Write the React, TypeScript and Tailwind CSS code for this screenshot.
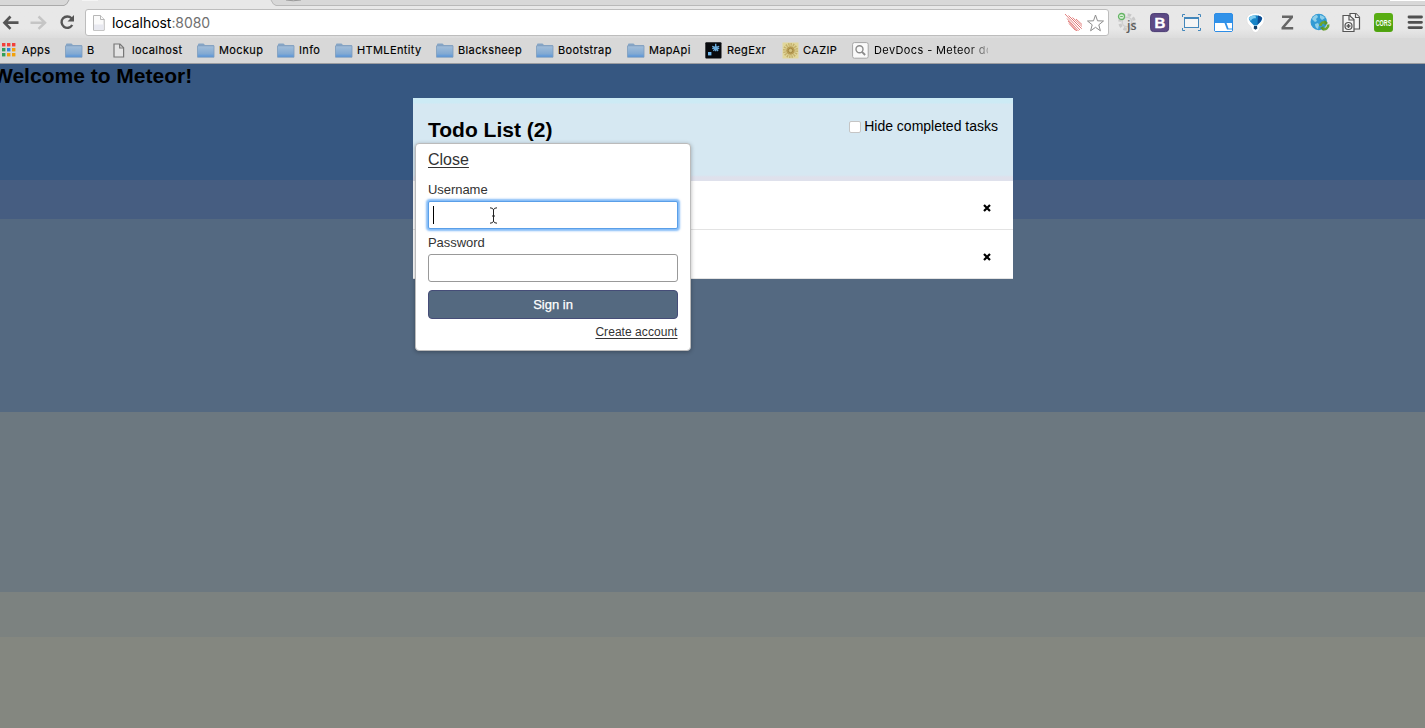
import React from "react";

const Folder = () => (
  <svg width="18" height="15" viewBox="0 0 18 15">
    <defs>
      <linearGradient id="folder" x1="0" y1="0" x2="0" y2="1">
        <stop offset="0" stopColor="#a4bfd9" />
        <stop offset="0.7" stopColor="#82a9d2" />
        <stop offset="1" stopColor="#5292dc" />
      </linearGradient>
    </defs>
    <path d="M1 3V1.500Q1 .5 2 .5h4.500l1.500 1.500h8q1 0 1 1V5H1z" fill="#86a5c5" />
    <path d="M.5 2.800h16.500v11.400H.5z" fill="url(#folder)" stroke="#7d9dbd" strokeWidth=".8" />
  </svg>
);

const Apps = () => (
  <svg width="14" height="14" viewBox="0 0 14 14">
    {["#f2413b", "#f2413b", "#f2413b", "#2f9e5b", "#2c82e0", "#f2a10c", "#2f9e5b", "#f2a10c", "#f2a10c"].map((c, i) => (
      <rect key={i} x={(i % 3) * 5} y={Math.floor(i / 3) * 5} width="3.4" height="3.4" fill={c} />
    ))}
  </svg>
);

const Page = () => (
  <svg width="12" height="15" viewBox="0 0 12 15" fill="#e4e4e4" stroke="#777" strokeWidth="1.2">
    <path d="M1 1h6l3.600 3.800V14H1z" />
    <path d="M6.700 1v4h4" fill="none" />
  </svg>
);

const RegExr = () => (
  <svg width="17" height="17" viewBox="0 0 17 17">
    <rect x=".3" y=".3" width="16.200" height="16.200" rx="1" fill="#080a0e" />
    <rect x="3" y="10" width="3.400" height="3.400" fill="#70b7ed" />
    <path d="M10.700 1.800v7.500M7.200 4.300l7 2.400M14.200 4.300l-7 2.400M8.500 9l2.200-3.500L13 9" fill="none" stroke="#69a9d8" strokeWidth="1.400" />
  </svg>
);

const Cazip = () => (
  <svg width="17" height="17" viewBox="0 0 17 17" fill="none">
    <rect x=".5" y=".5" width="16" height="16" fill="#e1d79b" />
    <circle cx="8.500" cy="8.500" r="6" stroke="#c4b06a" strokeWidth="3" strokeDasharray="1.300 1" />
    <circle cx="8.500" cy="8.500" r="4.300" fill="#b89d54" />
    <circle cx="8.500" cy="8.500" r="2.200" fill="#d2c07c" stroke="#a2873f" />
  </svg>
);

const DevDocs = () => (
  <svg width="17" height="17" viewBox="0 0 17 17" fill="none">
    <rect x=".6" y=".6" width="15.600" height="15.600" rx="1.800" fill="#fafafa" stroke="#a5a5a5" />
    <circle cx="7.500" cy="7.200" r="3.500" stroke="#8b8b8b" strokeWidth="1.400" />
    <path d="M10 9.800l3.100 3.200" stroke="#8b8b8b" strokeWidth="1.900" />
  </svg>
);

type Bookmark = { label: string; icon: React.ReactNode; cell: string; pad: string };

const bookmarks: Bookmark[] = [
  { label: "Apps", icon: <Apps />, cell: "w-[63px]", pad: "w-5" },
  { label: "B", icon: <Folder />, cell: "w-12", pad: "w-[22px]" },
  { label: "localhost", icon: <Page />, cell: "w-[84px]", pad: "w-[19px]" },
  { label: "Mockup", icon: <Folder />, cell: "w-20", pad: "w-[22px]" },
  { label: "Info", icon: <Folder />, cell: "w-[58px]", pad: "w-[22px]" },
  { label: "HTMLEntity", icon: <Folder />, cell: "w-[101px]", pad: "w-[22px]" },
  { label: "Blacksheep", icon: <Folder />, cell: "w-[100px]", pad: "w-[22px]" },
  { label: "Bootstrap", icon: <Folder />, cell: "w-[91px]", pad: "w-[22px]" },
  { label: "MapApi", icon: <Folder />, cell: "w-[78px]", pad: "w-[22px]" },
  { label: "RegExr", icon: <RegExr />, cell: "w-[77px]", pad: "w-[22px]" },
  { label: "CAZIP", icon: <Cazip />, cell: "w-[70px]", pad: "w-[21px]" },
];

const Extensions = () => (
  <div className="flex h-6 shrink-0 items-center gap-2">
    <svg width="24" height="24" viewBox="0 0 24 24">
      <circle cx="11" cy="11" r="7.300" fill="none" stroke="#c9c9c9" strokeWidth="3" strokeDasharray="3.500 2.300" />
      <circle cx="11" cy="11" r="4.800" fill="#e2e2e2" stroke="#cfcfcf" strokeWidth="1.500" />
      <circle cx="5.500" cy="5.500" r="3" fill="#d8efd5" stroke="#65b565" strokeWidth="1.300" />
      <path d="M4.200 5.500h2.600" stroke="#65b565" />
      <text x="11" y="18.500" fontSize="12.500" fontWeight="600" fill="#5c5c5c" fontFamily="Open Sans, sans-serif">js</text>
    </svg>
    <svg width="24" height="24" viewBox="0 0 24 24">
      <rect x="2.600" y="2.600" width="18" height="18" rx="3" fill="#5d4a85" stroke="#4a3c73" />
      <text x="11.800" y="17" textAnchor="middle" fontSize="15" fontWeight="700" fill="#fff" stroke="#fff" strokeWidth=".4" fontFamily="Liberation Sans, sans-serif">B</text>
    </svg>
    <svg width="24" height="24" viewBox="0 0 24 24" fill="none" stroke="#4387bb">
      <rect x="4.500" y="6.500" width="14" height="10" fill="#f5f5f5" />
      <path d="M4.500 7h14" strokeWidth="2" />
      <path d="M2.500 6V3.500H5M18 3.500h2.500V6M2.500 17v2.500H5M18 19.500h2.500V17" />
    </svg>
    <svg width="24" height="24" viewBox="0 0 24 24">
      <rect x="2.500" y="2.500" width="18" height="18" rx="1.500" fill="#3192e9" stroke="#2d8de6" />
      <path d="M3 12h9.500l2.500 6.500h5V20H3zM14.500 12H20v5.500h-3.500z" fill="#fff" />
    </svg>
    <svg width="24" height="24" viewBox="0 0 24 24">
      <path d="M2.500 7.500Q4 2 11.500 2t9 5.500q.5 5-4.500 8.500-1 5-4.500 5.500Q8 21 7 16 2 12.500 2.500 7.500z" fill="#fff" stroke="#d3d3d3" strokeWidth=".5" />
      <path d="M4.800 7q2-2.700 6.700-2.700T18.200 7q0 3-5.200 7.500h-3Q4.800 10 4.800 7z" fill="#1684c7" />
      <path d="M4.800 7q2-2.700 6.700-2.700l.5 3Q8 6.500 7 10 5.200 8.500 4.800 7z" fill="#7fcdf0" />
      <path d="M14 4.600q3.200.7 4.200 2.400-.5 3-4.700 6.500z" fill="#0d4a90" />
      <path d="M10 15h3l.3 2.500-1.800 1.200-1.800-1.200z" fill="#123f68" />
    </svg>
    <svg width="24" height="24" viewBox="0 0 24 24">
      <path d="M6 4.500h11v2.200L9 16h8.200v2.500H5.500v-2.200L13.500 7H6z" fill="#666" />
    </svg>
    <svg width="24" height="24" viewBox="0 0 24 24">
      <circle cx="10.800" cy="11" r="8.300" fill="#339bd4" />
      <path d="M4 8q2-4 5-4l1 2-2 2 1 2-2 1zM12 4q4 1 5 3l-3 2-2-2zM7 13l3-1 1 2-1 4q-3-1-3-5z" fill="#8fcfe9" />
      <path d="M12.500 15a3.700 3.700 0 0 1 5-3.500M20.200 13.500a4 4 0 0 1-5.500 4.300" fill="none" stroke="#6ba52f" strokeWidth="2.600" />
      <path d="M16.500 9l3.500 3-3.500 2.500zM15.500 15v5L12 17z" fill="#599729" />
    </svg>
    <svg width="24" height="24" viewBox="0 0 24 24" fill="#f4f4f4" stroke="#555" strokeWidth="1.200">
      <path d="M10 2.500h6l3.500 3.800V18H10z" />
      <path d="M15.500 2.500v4h4M3 4.500h6.500l4.500 4V20.500H3z" />
      <path d="M9 4.500v4.500h5" fill="none" />
      <circle cx="8.500" cy="15" r="3.500" />
      <path d="M8.500 13v4M6.500 15h4" strokeWidth="1.500" />
    </svg>
    <svg width="24" height="24" viewBox="0 0 24 24">
      <rect x="2" y="2" width="19" height="19" rx="3" fill="#58ad13" />
      <path d="M2.500 12h18v6q0 2.500-2.500 2.500H5Q2.500 20.500 2.500 18z" fill="#48990d" opacity=".6" />
      <text x="11.500" y="14.800" textAnchor="middle" textLength="15.500" lengthAdjust="spacingAndGlyphs" fontSize="9" fontWeight="700" fill="#fff" fontFamily="Liberation Sans, sans-serif">CORS</text>
    </svg>
    <svg width="24" height="24" viewBox="0 0 24 24">
      <path d="M5 6h12.500M5 11.300h12.500M5 16.600h12.500" stroke="#505050" strokeWidth="2.800" strokeLinecap="round" />
    </svg>
  </div>
);

const Browser = () => (
  <header className="flex h-16 shrink-0 flex-col overflow-hidden border-b border-[#9b9ca0] bg-[#d8d8d8]">
    <svg className="shrink-0" width="1425" height="6" viewBox="0 0 1425 6">
      <rect width="1425" height="6" fill="#e8e8e8" />
      <path d="M0 0h69q-2 5-5 5.500H0z" fill="#d8d8d8" />
      <path d="M69 0q-2 5-5 5.500H0" fill="none" stroke="#aaa" />
      <path d="M271 0q2 5 5 5.500h1149V0z" fill="#d8d8d8" />
      <path d="M271 0q2 5 5 5.500h1149" fill="none" stroke="#b9b9b9" />
      <path d="M82 0h16M1390 .5h35" stroke="#fff" />
      <path d="M286 0q7 1.500 15 0" fill="none" stroke="#999" />
    </svg>
    <div className="flex h-8 shrink-0 bg-linear-to-b from-[#e8e8e8] from-70% to-[#dcdcdc]">
      <svg className="shrink-0" width="85" height="32" viewBox="0 6 85 32" fill="none">
        <path d="M4 22.700h14.500M10.500 16.500l-6 6.200 6 6.200" stroke="#555" strokeWidth="2.700" />
        <path d="M30.500 22.700h13M38.500 16.500l6.500 6.200-6.500 6.200" stroke="#c5c5c5" strokeWidth="2.500" />
        <path d="M71.500 18.300a5.700 5.700 0 1 0 .7 6.700" stroke="#555" strokeWidth="2.400" />
        <path d="M74 15v6.500h-6.500z" fill="#555" />
      </svg>
      <div className="mt-[3px] flex h-[27px] w-[1024px] shrink-0 items-center rounded-[3px] border border-[#bdbdbd] bg-white">
        <svg className="ml-[7px] shrink-0" width="12" height="16" viewBox="0 0 12 16" fill="#fafafa" stroke="#b7b7b7">
          <path d="M.5.5h7l3.700 3.800v11H.5z" />
          <path d="M1 9.500h9.700v5.300H1z" fill="#e8e9f0" stroke="none" />
          <path d="M7.500.5v4h3.700" />
        </svg>
        <span className="ml-[7px] whitespace-nowrap font-[Inter,sans-serif] text-sm leading-5 tracking-[-0.05px] text-black">
          localhost<span className="text-[#707070]">:8080</span>
        </span>
        <svg className="ml-auto mr-0.5 shrink-0" width="42" height="22" viewBox="0 0 42 22" fill="none">
          <path d="M1 2l15 16M4.500 3.500l13 13M8.500 5.500l9.500 9M12 7l6 5.500M3 6.500l11.500 12.500M5 11.500l6.500 7M4 9l9 10M6.500 5.500l11 11" stroke="#e07472" strokeWidth=".9" />
          <path d="M31.500 3l2 5.800 6 .2-4.700 3.800 1.600 6-4.900-3.500-4.900 3.500 1.600-6L23.500 9l6-.2z" stroke="#8d8d8d" />
        </svg>
      </div>
      <div className="ml-[7px] mt-[5px]"><Extensions /></div>
    </div>
    <nav className="flex h-[25px] shrink-0 items-center pb-px pl-0.5 font-[Inter,sans-serif] text-[11px] tracking-[0.38px] text-black [-webkit-text-stroke:0.15px_#000]">
      {bookmarks.map((b) => (
        <a key={b.label} className={`${b.cell} flex shrink-0 items-center whitespace-nowrap`}>
          <span className={`${b.pad} shrink-0`}>{b.icon}</span>
          {b.label}
        </a>
      ))}
      <a className="flex w-[136px] items-center overflow-hidden whitespace-nowrap">
        <span className="w-[22px] shrink-0"><DevDocs /></span>
        <span className="bg-linear-to-r from-black from-[88px] to-[#d8d8d8] to-[120px] bg-clip-text text-transparent [-webkit-text-stroke:0px]">DevDocs - Meteor do</span>
      </a>
    </nav>
  </header>
);

const Task = () => (
  <li className="flex h-[49px] items-center justify-end border-b border-[#e3e3e3] bg-white pr-[22px]">
    <svg className="mt-[5px]" width="8" height="8" viewBox="0 0 8 8">
      <path d="M1 1l6 6M7 1L1 7" stroke="#000" strokeWidth="2.200" />
    </svg>
  </li>
);

const Login = () => (
  <form className="absolute left-0.5 top-[45px] flex h-52 w-[276px] flex-col rounded border border-[#bbb] bg-white px-3 text-[13px] text-[#333] shadow-[0_1px_4px_rgba(0,0,0,0.3)]">
    <a className="ml-[0.5px] mt-1.5 self-start text-base leading-5 underline underline-offset-2">Close</a>
    <label className="ml-[0.5px] mt-[11px] leading-[18px] tracking-[-0.05px]">Username</label>
    <div className="mt-0.5 flex h-7 shrink-0 items-center rounded-[2px] border border-[#5a9fe8] bg-white pl-1 shadow-[0_0_2px_2px_rgba(91,166,245,0.75)]">
      <span className="h-[18px] w-px bg-black" />
      <svg className="ml-[55px] mt-px" width="9" height="17" viewBox="0 0 9 17" fill="none" stroke="#222">
        <path d="M1 .8q3 0 3.500 2Q5 .8 8 .8M4.500 2.500v12M3 9h3M1 16.200q3 0 3.500-2 .5 2 3.500 2" />
      </svg>
    </div>
    <label className="ml-[0.5px] mt-[5px] leading-[18px] tracking-[-0.05px]">Password</label>
    <div className="mt-0.5 h-7 shrink-0 rounded-[3px] border border-[#999] bg-white" />
    <button type="button" className="mt-2 h-[29px] shrink-0 rounded border border-[#464d78] bg-[#546980] pl-px text-[13px] text-white [-webkit-text-stroke:0.25px_#fff]">Sign in</button>
    <a className="mt-1 self-end text-xs leading-[18px] tracking-[0.05px] underline underline-offset-2">Create account</a>
  </form>
);

export default function App() {
  return (
    <div className="flex h-[728px] w-[1425px] flex-col overflow-hidden bg-[#546980] font-['Liberation_Sans',sans-serif] text-black">
      <Browser />
      <main className="h-[664px] bg-[linear-gradient(to_bottom,#365781_116px,#465d81_116px,#465d81_155px,#546981_155px,#546981_348px,#6c7880_348px,#6c7880_528px,#7c8280_528px,#7c8280_573px,#848780_573px)]">
        <h1 className="-ml-[7px] h-[34px] text-[21px] font-bold leading-6">Welcome to Meteor!</h1>
        <section className="relative mx-auto w-[600px]">
          <div className="flex h-[83px] justify-between bg-[linear-gradient(to_bottom,#cdebf5_5px,#d6e8f2_6px,#d6e8f2_77px,#dfe1ec_79px)] px-[15px]">
            <h2 className="ml-[0.5px] mt-5 text-[21px] font-bold leading-6">Todo List (2)</h2>
            <label className="-mr-[0.5px] mt-[18px] flex h-5 items-center text-sm">
              <span className="mr-[3px] mt-0.5 size-3 rounded-[2px] border border-[#c5c5c5] bg-white" />
              Hide completed tasks
            </label>
          </div>
          <ul><Task /><Task /></ul>
          <Login />
        </section>
      </main>
    </div>
  );
}
